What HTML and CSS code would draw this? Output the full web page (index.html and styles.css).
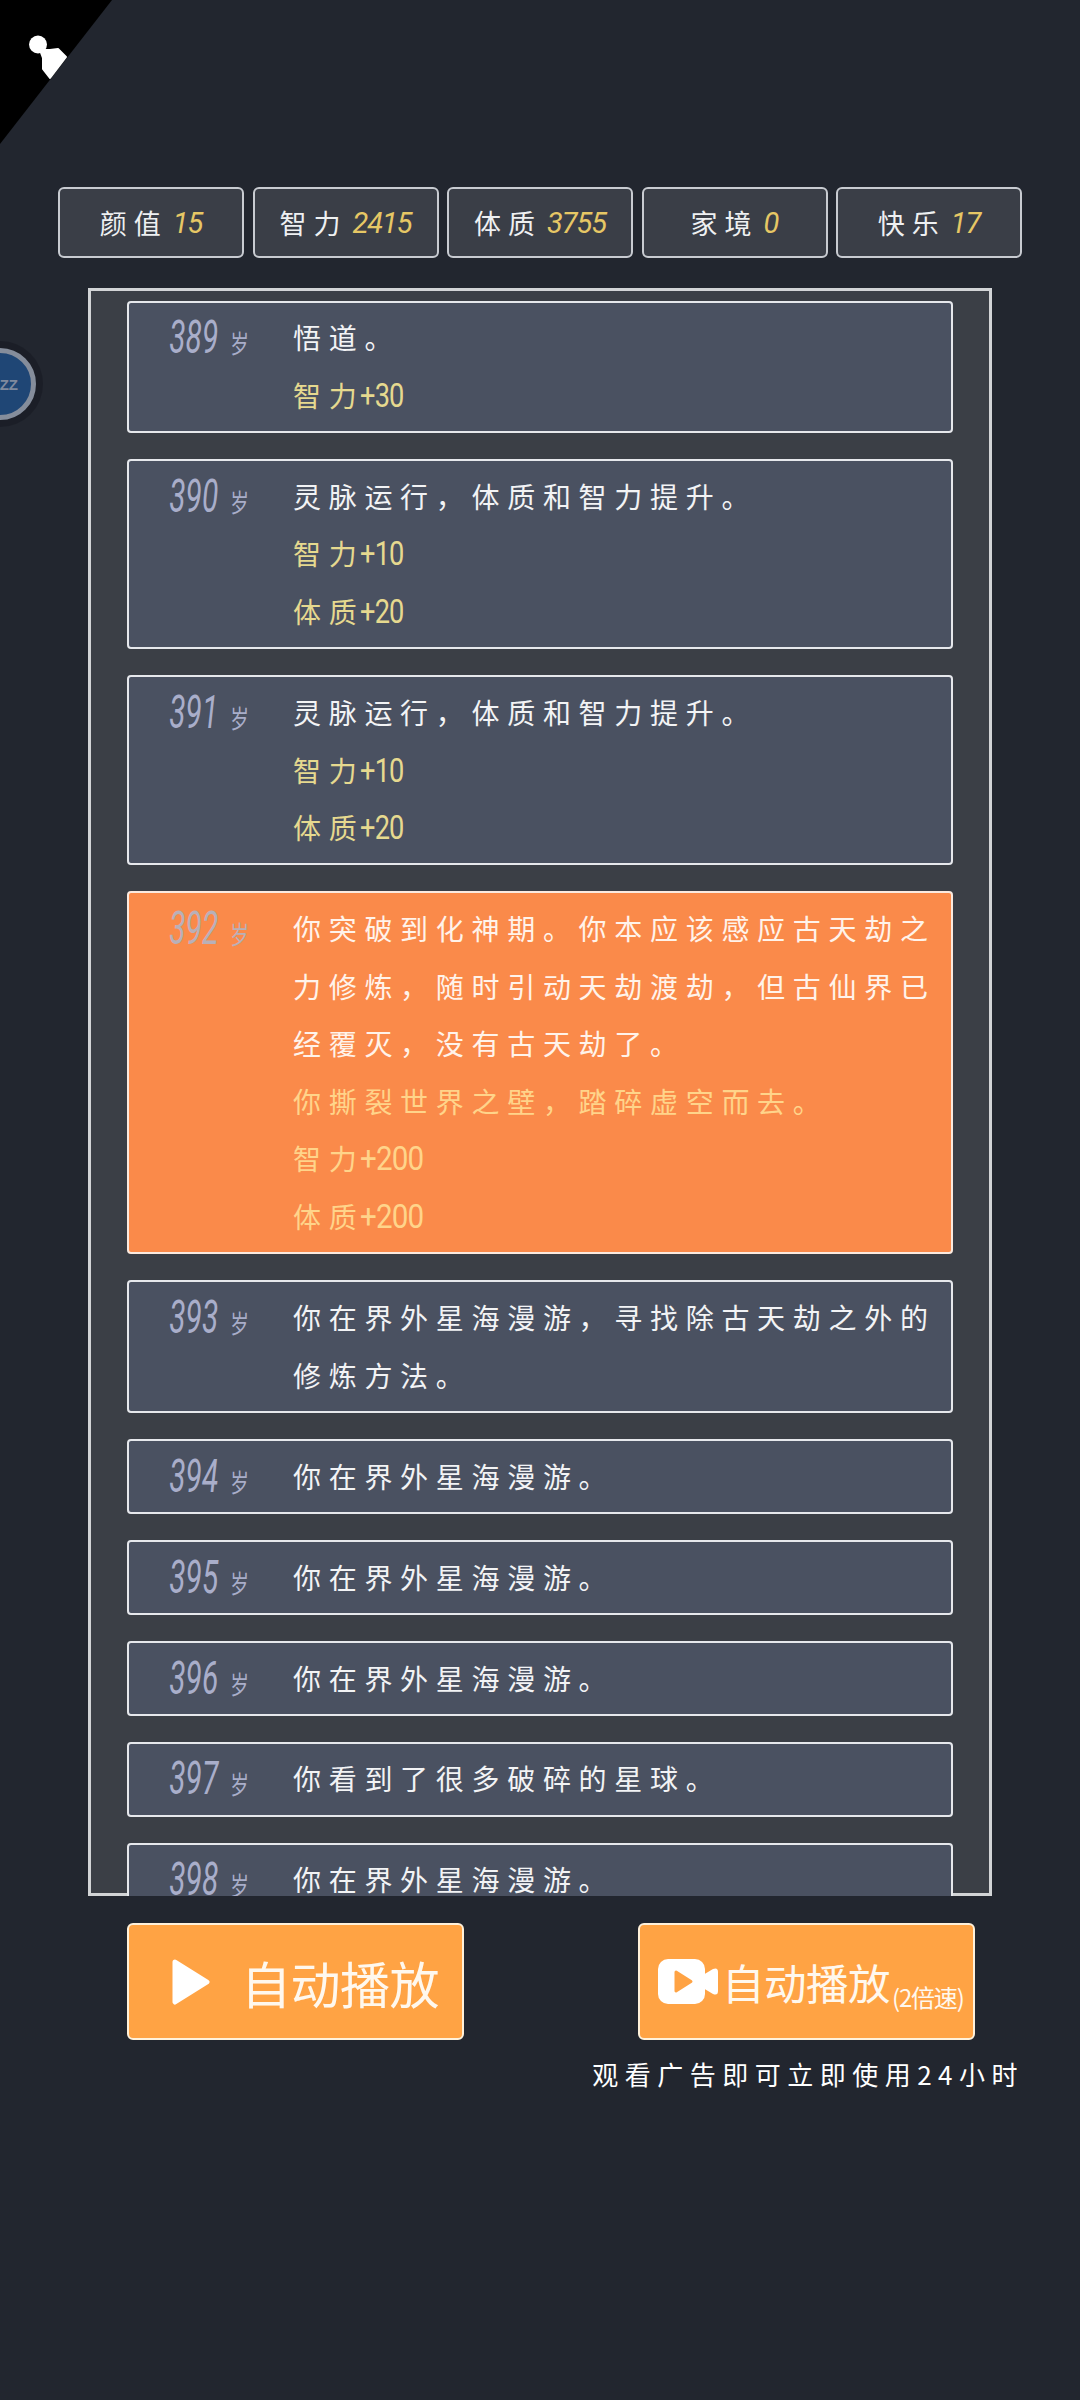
FILE: index.html
```html
<!DOCTYPE html>
<html lang="zh-CN">
<head>
<meta charset="utf-8">
<title>人生</title>
<link rel="stylesheet" href="styles.css">
</head>
<body>
<svg class="corner" viewBox="0 0 112 144" width="112" height="144" aria-hidden="true">
  <polygon points="0,0 112,0 0,144" fill="#000"/>
  <circle cx="38" cy="44.5" r="9" fill="#fff"/>
  <path d="M40 50 L50 50 L58 49 L66 57 L50 78 L43 69 L43 58 Z" fill="#fff" stroke="#fff" stroke-width="2" stroke-linejoin="round"/>
</svg>
<div class="sleep"><span class="sleep-text">ZZ</span></div>

<main class="page">
  <section class="stats">
    <div class="stat">颜值<b>15</b></div>
    <div class="stat">智力<b>2415</b></div>
    <div class="stat">体质<b>3755</b></div>
    <div class="stat">家境<b>0</b></div>
    <div class="stat">快乐<b>17</b></div>
  </section>

  <section class="panel">
    <article class="card">
      <div class="age"><span class="num">389</span><span class="unit">岁</span></div>
      <div class="lines"><p>悟道。</p><p class="gain">智力<i>+30</i></p></div>
    </article>
    <article class="card">
      <div class="age"><span class="num">390</span><span class="unit">岁</span></div>
      <div class="lines"><p>灵脉运行&#xFF0C;体质和智力提升。</p><p class="gain">智力<i>+10</i></p><p class="gain">体质<i>+20</i></p></div>
    </article>
    <article class="card">
      <div class="age"><span class="num">391</span><span class="unit">岁</span></div>
      <div class="lines"><p>灵脉运行&#xFF0C;体质和智力提升。</p><p class="gain">智力<i>+10</i></p><p class="gain">体质<i>+20</i></p></div>
    </article>
    <article class="card card-hot">
      <div class="age"><span class="num">392</span><span class="unit">岁</span></div>
      <div class="lines"><p>你突破到化神期。你本应该感应古天劫之力修炼&#xFF0C;随时引动天劫渡劫&#xFF0C;但古仙界已经覆灭&#xFF0C;没有古天劫了。</p><p class="gain">你撕裂世界之壁&#xFF0C;踏碎虚空而去。</p><p class="gain">智力<i>+200</i></p><p class="gain">体质<i>+200</i></p></div>
    </article>
    <article class="card">
      <div class="age"><span class="num">393</span><span class="unit">岁</span></div>
      <div class="lines"><p>你在界外星海漫游&#xFF0C;寻找除古天劫之外的修炼方法。</p></div>
    </article>
    <article class="card">
      <div class="age"><span class="num">394</span><span class="unit">岁</span></div>
      <div class="lines"><p>你在界外星海漫游。</p></div>
    </article>
    <article class="card">
      <div class="age"><span class="num">395</span><span class="unit">岁</span></div>
      <div class="lines"><p>你在界外星海漫游。</p></div>
    </article>
    <article class="card">
      <div class="age"><span class="num">396</span><span class="unit">岁</span></div>
      <div class="lines"><p>你在界外星海漫游。</p></div>
    </article>
    <article class="card">
      <div class="age"><span class="num">397</span><span class="unit">岁</span></div>
      <div class="lines"><p>你看到了很多破碎的星球。</p></div>
    </article>
    <article class="card">
      <div class="age"><span class="num">398</span><span class="unit">岁</span></div>
      <div class="lines"><p>你在界外星海漫游。</p></div>
    </article>
  </section>

  <section class="actions">
    <button class="btn btn-play" type="button">
      <svg class="icon-play" viewBox="0 0 38 46" width="38" height="46" aria-hidden="true"><path d="M3 3 L35 23 L3 43 Z" fill="#fff" stroke="#fff" stroke-width="5" stroke-linejoin="round"/></svg>
      <span>自动播放</span>
    </button>
    <button class="btn btn-video" type="button">
      <svg class="icon-video" viewBox="0 0 60 45" width="60" height="45" aria-hidden="true">
        <rect x="0" y="0" width="47" height="45" rx="10" fill="#fff"/>
        <path d="M45 16 L55 10 Q60 8 60 13 L60 32 Q60 37 55 35 L45 29 Z" fill="#fff"/>
        <path d="M18 13 L33 22.5 L18 32 Z" fill="#ffa344" stroke="#ffa344" stroke-width="3" stroke-linejoin="round"/>
      </svg>
      <span class="btn-label">自动播放</span><small class="btn-note">(2倍速)</small>
    </button>
  </section>
  <p class="hint">观看广告即可立即使用24小时</p>
</main>
</body>
</html>
```
FILE: styles.css
```css
* { box-sizing: border-box; }

html, body { margin: 0; padding: 0; }

body {
  width: 1080px;
  height: 2400px;
  overflow: hidden;
  position: relative;
  background: #22262f;
  color: #fff;
  font-family: "Noto Sans CJK SC", "Noto Sans", sans-serif;
}

.corner { position: absolute; left: 0; top: 0; }

.sleep {
  position: absolute;
  left: -36px;
  top: 348px;
  width: 72px;
  height: 72px;
  padding-right: 13px;
  border-radius: 50%;
  background: #1f4675;
  border: 5px solid #858d9b;
  box-shadow: 0 0 0 7px rgba(20, 23, 30, .45);
  display: flex;
  align-items: center;
  justify-content: flex-end;
}

.sleep-text {
  font: 700 15px "Liberation Sans", sans-serif;
  color: #7f8a9e;
}

.page { padding-top: 187px; }

.stats {
  display: grid;
  grid-template-columns: repeat(5, 186px);
  column-gap: 8.5px;
  margin: 0 58px;
  height: 71px;
}

.stat {
  display: flex;
  align-items: center;
  justify-content: center;
  border: 2px solid #c8cbd1;
  border-radius: 6px;
  background: #3a3e47;
  font-size: 27px;
  font-weight: 400;
  letter-spacing: 7px;
  color: #eef0f2;
}

.stat b {
  margin-left: 5px;
  font: italic 400 29px Roboto, "Liberation Sans", sans-serif;
  letter-spacing: -1px;
  color: #e6c765;
}

.panel {
  height: 1608px;
  width: 904px;
  margin: 30px 0 0 88px;
  padding: 12.5px 39px 0 39px;
  background: #3b3f46;
  box-shadow: inset 0 0 0 3px #d2d4d6;
  overflow: hidden;
  display: flex;
  flex-direction: column;
  gap: 26px;
}

.card {
  flex: none;
  display: flex;
  padding: 6.7px 0;
  border: 2px solid #e6e8ec;
  border-radius: 4px;
  background: #4a5161;
}

.card-hot {
  background: #fa8a4a;
  border-color: #fbeadf;
}

.age {
  flex: none;
  width: 120px;
  height: 57.6px;
  display: flex;
  justify-content: flex-end;
  align-items: baseline;
  gap: 6px;
  line-height: 57.6px;
  color: #a9aeca;
}

.card-hot .age { color: #b9b0b8; }

.num {
  display: inline-block;
  font: italic 400 46px/57.6px Roboto, "Liberation Sans", sans-serif;
  transform: scaleX(.65);
  transform-origin: right center;
}

.unit {
  display: inline-block;
  font-size: 25px;
  transform: scaleX(.75);
  transform-origin: right center;
}

.lines {
  flex: none;
  width: 648px;
  margin-left: 44px;
}

.lines p {
  margin: 0;
  font-size: 28px;
  font-weight: 400;
  line-height: 57.6px;
  letter-spacing: 7.7px;
  color: #f2f3f5;
}

.lines .gain { color: #e6d98f; }

.card-hot .lines p { color: #fff3ea; }

.card-hot .lines .gain { color: #ffd48a; }

.lines i {
  display: inline-block;
  font: 400 34px/34px Roboto, "Liberation Sans", sans-serif;
  letter-spacing: -1px;
  margin-left: -4px;
  transform: scaleX(.8);
  transform-origin: left center;
}

.card-hot .lines i { transform: scaleX(.87); }

.actions {
  display: flex;
  justify-content: space-between;
  width: 848px;
  margin: 27px 0 0 127px;
}

.btn {
  width: 337px;
  height: 117px;
  display: flex;
  align-items: center;
  padding: 0;
  border: 2px solid #fff1da;
  border-radius: 6px;
  background: #ffa344;
  color: #fff8ee;
  font-family: inherit;
  font-weight: 400;
}

.btn-play {
  padding-left: 43px;
  gap: 31px;
  font-size: 50px;
  letter-spacing: -.5px;
}

.btn-video {
  padding-left: 18px;
  font-size: 42.5px;
  letter-spacing: -.5px;
}

.btn-label { margin-left: 4px; }

.btn-note {
  align-self: flex-end;
  margin: 0 0 27px 2px;
  font-size: 24px;
  letter-spacing: -1.2px;
  line-height: 28px;
}

.hint {
  margin: 15px 56px 0 0;
  text-align: right;
  font-size: 26px;
  font-weight: 400;
  line-height: 38px;
  letter-spacing: 6.5px;
  color: #fff;
}
```
